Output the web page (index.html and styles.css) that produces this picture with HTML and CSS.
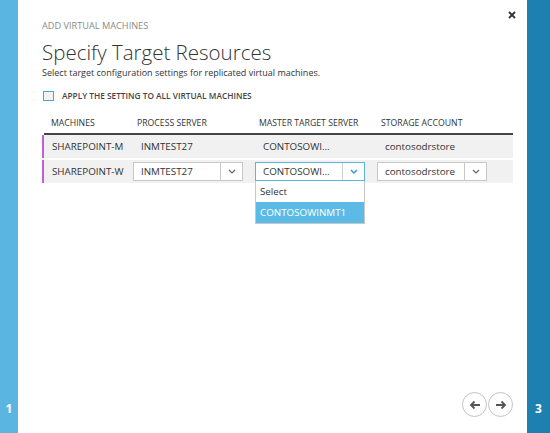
FILE: index.html
```html
<!DOCTYPE html>
<html>
<head>
<meta charset="utf-8">
<link rel="stylesheet" href="styles.css">
</head>
<body>
<div class="strip strip-left"><span class="step">1</span></div>
<div class="main">
  <div class="topbar">
    <div class="crumb">ADD VIRTUAL MACHINES</div>
    <svg class="close" width="8" height="8" viewBox="0 0 8 8"><path d="M1 1L7 7M7 1L1 7" stroke="#333" stroke-width="1.8"/></svg>
  </div>
  <h1 class="title">Specify Target Resources</h1>
  <p class="subtitle">Select target configuration settings for replicated virtual machines.</p>
  <label class="apply"><span class="checkbox"></span>APPLY THE SETTING TO ALL VIRTUAL MACHINES</label>

  <div class="table">
    <div class="row head">
      <div class="c c1">MACHINES</div>
      <div class="c">PROCESS SERVER</div>
      <div class="c">MASTER TARGET SERVER</div>
      <div class="c">STORAGE ACCOUNT</div>
    </div>
    <div class="row item">
      <div class="c c1">SHAREPOINT-M</div>
      <div class="c ct">INMTEST27</div>
      <div class="c ct">CONTOSOWI...</div>
      <div class="c ct lower">contosodrstore</div>
    </div>
    <div class="row item">
      <div class="c c1">SHAREPOINT-W</div>
      <div class="c">
        <div class="select"><span class="val">INMTEST27</span><span class="arrow"><svg width="8" height="5" viewBox="0 0 8 5"><path d="M1 1l3 3 3-3" fill="none" stroke="#666" stroke-width="1.2"/></svg></span></div>
      </div>
      <div class="c">
        <div class="select focus"><span class="val">CONTOSOWI...</span><span class="arrow"><svg width="8" height="5" viewBox="0 0 8 5"><path d="M1 1l3 3 3-3" fill="none" stroke="#2a9ad6" stroke-width="1.4"/></svg></span>
          <div class="menu">
            <div class="opt">Select</div>
            <div class="opt sel">CONTOSOWINMT1</div>
          </div>
        </div>
      </div>
      <div class="c">
        <div class="select wide"><span class="val lower">contosodrstore</span><span class="arrow"><svg width="8" height="5" viewBox="0 0 8 5"><path d="M1 1l3 3 3-3" fill="none" stroke="#666" stroke-width="1.2"/></svg></span></div>
      </div>
    </div>
  </div>

  <div class="footer">
    <span class="nav"><svg width="12" height="10" viewBox="0 0 12 10"><path d="M11 5H2M5.5 1.5L2 5l3.5 3.5" fill="none" stroke="#555" stroke-width="1.8"/></svg></span>
    <span class="nav"><svg width="12" height="10" viewBox="0 0 12 10"><path d="M1 5h9M6.5 1.5L10 5 6.5 8.5" fill="none" stroke="#555" stroke-width="1.8"/></svg></span>
  </div>
</div>
<div class="strip strip-right"><span class="step">3</span></div>
</body>
</html>
```

FILE: styles.css
```css
* { box-sizing: border-box; }
html, body { margin: 0; height: 100%; }
body {
  display: flex;
  width: 550px;
  height: 433px;
  font-family: "Open Sans", "Noto Sans", sans-serif;
  color: #333;
  background: #fff;
  overflow: hidden;
}
.strip {
  display: flex;
  flex-direction: column;
  justify-content: flex-end;
  align-items: center;
  color: #fff;
  font-weight: 700;
  font-size: 12px;
  padding-bottom: 17px;
}
.strip-left { width: 18px; background: #5ab6e0; }
.strip-right { width: 23px; background: #1e80b1; padding-bottom: 17px; }
.step { line-height: 14px; }
.main {
  flex: 1;
  display: flex;
  flex-direction: column;
  padding: 10px 14px 16px 24px;
}
.topbar {
  display: flex;
  justify-content: space-between;
  align-items: flex-start;
  height: 30px;
}
.crumb {
  margin-top: 9px;
  font-size: 9.2px;
  color: #8a8a8a;
}
.close { margin-top: 1px; margin-right: -3px; }
.title {
  margin: 0;
  font-size: 20.5px;
  font-weight: 300;
  line-height: 24px;
  color: #333;
}
.subtitle {
  margin: 3px 0 0;
  font-size: 9px;
  line-height: 12px;
  color: #333;
}
.apply {
  display: flex;
  align-items: center;
  margin-top: 11px;
  margin-left: 1px;
  font-size: 8.3px;
  font-weight: 600;
  color: #444;
}
.checkbox {
  width: 11px;
  height: 10px;
  border: 1px solid #4aa3d4;
  background: #f4f4f4;
  margin-right: 8px;
}
.table { margin-top: 12px; }
.row {
  display: grid;
  grid-template-columns: 89px 122px 122px 1fr;
  align-items: center;
}
.row.head {
  height: 22px;
  border-bottom: 2px solid #444;
  margin-left: 2px;
  font-size: 8.7px;
  color: #333;
}
.row.head .c { padding-left: 4px; }
.row.head .c1 { padding-left: 7px; }
.row.item {
  height: 23px;
  background: #f1f1f1;
  border-left: 2px solid #c25fd4;
  margin-top: 2px;
  font-size: 9.8px;
  color: #333;
}
.row.head + .row.item { margin-top: 0; }
.c { white-space: nowrap; overflow: visible; }
.c1 { padding-left: 8px; overflow: hidden; }
.ct { padding-left: 8px; }
.lower { text-transform: none; }
.select {
  position: relative;
  display: flex;
  width: 110px;
  height: 19px;
  border: 1px solid #c8c8c8;
  background: #fff;
}
.select.focus { border-color: #5ab6e0; }
.select .val {
  flex: 1;
  padding-left: 7px;
  line-height: 17px;
}
.select .arrow {
  width: 22px;
  border-left: 1px solid #c8c8c8;
  display: flex;
  align-items: center;
  justify-content: center;
}
.select.focus .arrow { border-left-color: #d0d0d0; }
.menu {
  position: absolute;
  left: -1px;
  top: 18px;
  width: 110px;
  background: #fff;
  border: 1px solid #c8c8c8;
  border-top: none;
  z-index: 2;
}
.opt {
  height: 21px;
  line-height: 21px;
  padding-left: 4px;
}
.opt.sel { background: #5bbbe6; color: #fff; }
.footer {
  margin-top: auto;
  display: flex;
  justify-content: flex-end;
  gap: 1px;
}
.nav {
  width: 25px;
  height: 25px;
  border: 1.5px solid #c4c4c4;
  border-radius: 50%;
  display: flex;
  align-items: center;
  justify-content: center;
}
```
